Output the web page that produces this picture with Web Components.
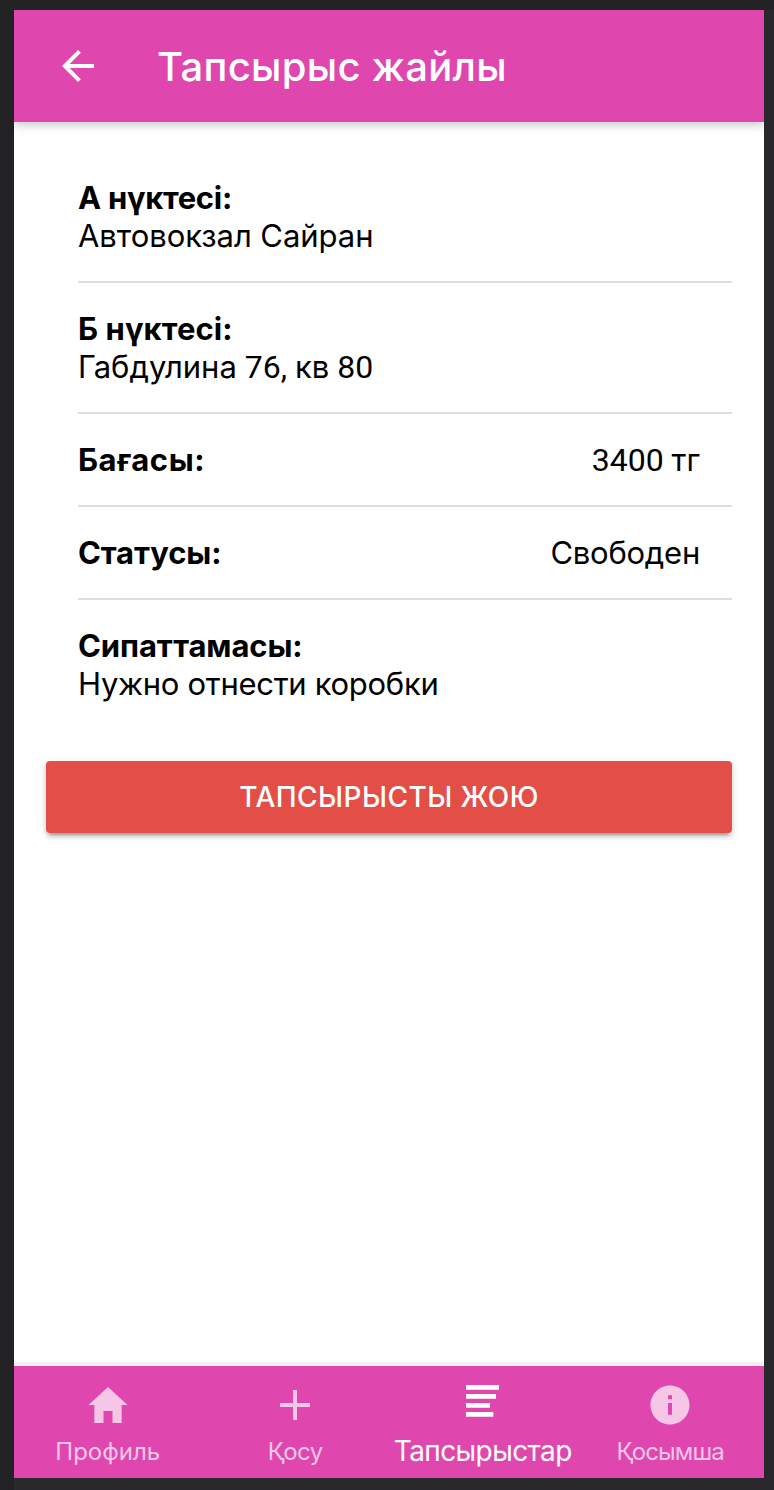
<!DOCTYPE html>
<html lang="kk">
<head>
<meta charset="utf-8">
<title>Тапсырыс жайлы</title>
<style>
html{background:#242426}
body{margin:0;font-family:Inter,"Liberation Sans",Arial,sans-serif;color:#000}
.num{font:32px/0 Roboto,sans-serif;letter-spacing:0;white-space:pre}
</style>
</head>
<body>
<order-app>
  <app-header slot="header">Тапсырыс жайлы</app-header>
  <order-row label="А нүктесі:" style="--ls:-.3px;--vs:-.05px">Автовокзал Сайран</order-row>
  <order-row label="Б нүктесі:" style="--ls:.08px">Габдулина<span class="num"> 76, </span>кв<span class="num"> 80</span></order-row>
  <order-row inline label="Бағасы:" style="--ls:.55px"><span class="num">3400 </span>тг</order-row>
  <order-row inline label="Статусы:" style="--ls:-.12px;--vs:-.25px">Свободен</order-row>
  <order-row last label="Сипаттамасы:" style="--ls:-.1px;--vs:-.3px">Нужно отнести коробки</order-row>
  <danger-button>Тапсырысты жою</danger-button>
  <tab-bar slot="footer">
    <tab-item icon="home">Профиль</tab-item>
    <tab-item icon="add" style="--ls:-.5px">Қосу</tab-item>
    <tab-item icon="list" active style="--ls:-.6px">Тапсырыстар</tab-item>
    <tab-item icon="info" style="--ls:-.85px">Қосымша</tab-item>
  </tab-bar>
</order-app>
<script>
const define=(name,html,setup)=>customElements.define(name,class extends HTMLElement{
  constructor(){super();this.attachShadow({mode:'open'})}
  connectedCallback(){this.shadowRoot.innerHTML=html;if(setup)setup(this,this.shadowRoot)}
});

define('order-app',`<style>
:host{display:block;box-sizing:border-box;height:1490px;padding:10px 10px 12px 14px;background:linear-gradient(90deg,#222224 0 14px,#29292d 14px) 0 10px no-repeat,#232325}
.screen{display:flex;flex-direction:column;height:1468px;background:#fff}
main{flex:1;padding:30px 32px 0}
::slotted(app-header),::slotted(tab-bar){position:relative}
</style><div class="screen"><slot name="header"></slot><main><slot></slot></main><slot name="footer"></slot></div>`);

define('app-header',`<style>
:host{display:flex;align-items:center;height:112px;box-sizing:border-box;padding-left:40px;background:#e047ae;color:#fff;box-shadow:0 2px 10px rgba(0,0,0,.26);clip-path:inset(0 0 -14px 0)}
svg{width:48px;height:48px;fill:#fff}
h1{margin:2px 0 0 55px;font-size:40px;line-height:48px;font-weight:550;letter-spacing:.3px;white-space:nowrap}
</style><svg viewBox="0 0 24 24"><path d="M20 11H7.83l5.59-5.59L12 4l-8 8 8 8 1.41-1.41L7.83 13H20v-2z"/></svg><h1><slot></slot></h1>`);

define('order-row',`<style>
:host{display:flex;flex-direction:column;margin:0 0 0 32px;padding:27px 32px 26px 0;border-bottom:2px solid #dedede;font-size:31px;line-height:38px;white-space:nowrap}
:host([inline]){flex-direction:row;justify-content:space-between}
:host([last]){border:0}
b{letter-spacing:var(--ls,0)}
span{letter-spacing:var(--vs,0)}
</style><b></b><span><slot></slot></span>`,(el,root)=>{root.querySelector('b').textContent=el.getAttribute('label')});

define('danger-button',`<style>
:host{display:block;margin-top:32px}
button{display:block;width:100%;height:72px;padding:0;border:0;border-radius:4px;background:#e34e46;color:#fff;font:500 28px/72px Inter,"Liberation Sans",Arial,sans-serif;letter-spacing:.45px;text-transform:uppercase;box-shadow:0 4px 4px rgba(0,0,0,.14),0 6px 2px -4px rgba(0,0,0,.2),0 2px 10px rgba(0,0,0,.12)}
</style><button><slot></slot></button>`);

define('tab-bar',`<style>
:host{display:grid;grid-template-columns:repeat(4,1fr);height:112px;background:#e047ae;box-shadow:0 0 0 4px #f1f1f1;clip-path:inset(-4px 0 0 0)}
</style><slot></slot>`);

const icons={
home:'<path d="M208 448V320h96v128h97.600V256H464L256 64 48 256h62.400v192z"/>',
add:'<path d="M416 277.333H277.333V416h-42.666V277.333H96v-42.666h138.667V96h42.666v138.667H416v42.666z"/>',
list:'<path d="M0 0h33v4.7H0zM0 9h30v4.7H0zM0 18h24v4.7H0zM0 27h27.3v4.7H0z"/>',
info:'<path d="M256 48C141.200 48 48 141.200 48 256s93.200 208 208 208 208-93.200 208-208S370.800 48 256 48zm21 312h-42V235h42v125zm0-166h-42v-42h42v42z"/>'};
define('tab-item',`<style>
:host{display:flex;flex-direction:column;align-items:center;color:#f5c6e6;font-size:24px;line-height:30px;white-space:nowrap}
svg{display:block;fill:currentColor;width:48px;height:48px;margin-top:15px}
span{margin-top:8px;letter-spacing:var(--ls,0)}
:host([active]){color:#fff;font-size:28px}
:host([active]) svg{width:33px;height:32px;margin-top:19px}
:host([active]) span{margin-top:19px}
</style><svg></svg><span><slot></slot></span>`,(el,root)=>{
const s=root.querySelector('svg'),n=el.getAttribute('icon');
s.setAttribute('viewBox',n==='list'?'0 0 33 32':'0 0 512 512');s.innerHTML=icons[n]});
</script>
</body>
</html>
